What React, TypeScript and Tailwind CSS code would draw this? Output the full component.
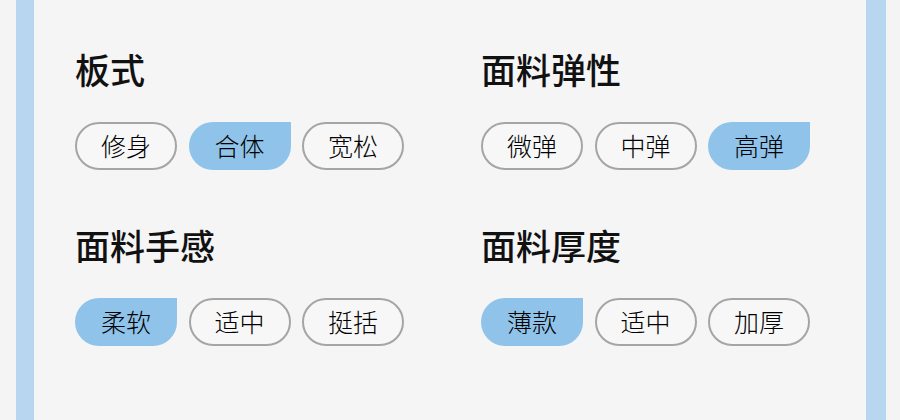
import React from 'react';

type Group = {
  title: string;
  options: string[];
  selected: number;
};

const groups: Group[] = [
  { title: '板式', options: ['修身', '合体', '宽松'], selected: 1 },
  { title: '面料弹性', options: ['微弹', '中弹', '高弹'], selected: 2 },
  { title: '面料手感', options: ['柔软', '适中', '挺括'], selected: 0 },
  { title: '面料厚度', options: ['薄款', '适中', '加厚'], selected: 0 },
];

const Chip: React.FC<{ label: string; active: boolean }> = ({ label, active }) => (
  <button
    className={
      active
        ? 'flex h-[48px] w-[102px] items-center justify-center rounded-[24px] rounded-tr-none bg-[#8fc3e9] text-[25px] font-light text-black'
        : 'flex h-[48px] w-[102px] items-center justify-center rounded-[24px] border-2 border-[#a5a5a5] bg-[#f7f7f7] text-[25px] font-light text-black'
    }
  >
    {label}
  </button>
);

export default function App() {
  return (
    <div
      className="flex h-[420px] w-[900px] bg-[#f4f4f4] pl-4"
      style={{ fontFamily: '"Noto Sans CJK SC", "Noto Sans", sans-serif' }}
    >
      <div className="w-[18px] bg-[#b8d6f0]" />
      <div className="w-[832px] bg-[#f5f5f5] pl-[41px] pt-[49px]">
        <div className="grid grid-cols-[344px_344px] gap-x-[62px] gap-y-[55px]">
          {groups.map((g) => (
            <div key={g.title}>
              <h2 className="h-[40px] text-[35px] font-medium leading-[40px] text-[#111]">{g.title}</h2>
              <div className="mt-[33px] flex gap-[11.5px]">
                {g.options.map((opt, i) => (
                  <Chip key={opt} label={opt} active={i === g.selected} />
                ))}
              </div>
            </div>
          ))}
        </div>
      </div>
      <div className="w-[20px] bg-[#b8d6f0]" />
    </div>
  );
}
